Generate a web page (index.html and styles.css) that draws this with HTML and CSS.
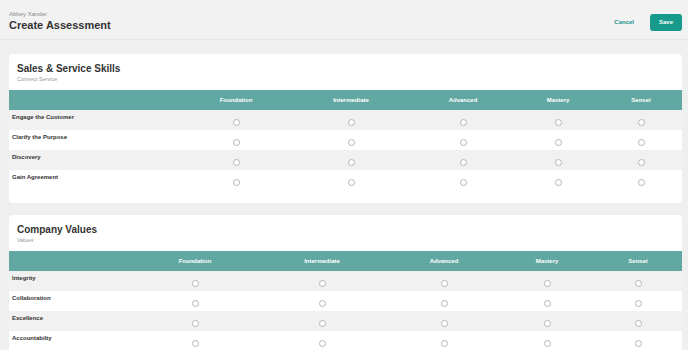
FILE: index.html
```html
<!DOCTYPE html>
<html lang="en">
<head>
    <meta charset="UTF-8">
    <meta name="viewport" content="width=device-width, initial-scale=1.0">
    <title>Create Assessment</title>
    <link rel="stylesheet" href="styles.css">
</head>
<body>

<div class="topbar">
    <div class="title-block">
        <div class="person">Abbey Xander</div>
        <h1>Create Assessment</h1>
    </div>
    <div class="actions">
        <button class="btn-cancel">Cancel</button>
        <button class="btn-save">Save</button>
    </div>
</div>

<div class="content">
    <div class="card">
        <div class="card-head">
            <h2>Sales &amp; Service Skills</h2>
            <div class="sub">Connect Service</div>
        </div>
        <table class="grid skills">
            <colgroup>
                <col class="c-label"><col class="c1"><col class="c2"><col class="c3"><col class="c4"><col class="c5">
            </colgroup>
            <thead>
                <tr><th></th><th>Foundation</th><th>Intermediate</th><th>Advanced</th><th>Mastery</th><th>Sensei</th></tr>
            </thead>
            <tbody id="skillsBody"></tbody>
        </table>
    </div>

    <div class="card">
        <div class="card-head">
            <h2>Company Values</h2>
            <div class="sub">Values</div>
        </div>
        <table class="grid values">
            <colgroup>
                <col class="c-label"><col class="c1"><col class="c2"><col class="c3"><col class="c4"><col class="c5">
            </colgroup>
            <thead>
                <tr><th></th><th>Foundation</th><th>Intermediate</th><th>Advanced</th><th>Mastery</th><th>Sensei</th></tr>
            </thead>
            <tbody id="valuesBody"></tbody>
        </table>
    </div>
</div>

<script>
    const skills = ['Engage the Customer', 'Clarify the Purpose', 'Discovery', 'Gain Agreement'];
    const values = ['Integrity', 'Collaboration', 'Excellence', 'Accountabilty'];

    function fillRows(tbody, items, group) {
        items.forEach((name, i) => {
            const tr = document.createElement('tr');
            let cells = `<td class="label">${name}</td>`;
            for (let lvl = 0; lvl < 5; lvl++) {
                cells += `<td class="pick"><input type="radio" name="${group}-${i}" value="${lvl}"></td>`;
            }
            tr.innerHTML = cells;
            tbody.appendChild(tr);
        });
    }

    fillRows(document.getElementById('skillsBody'), skills, 'skill');
    fillRows(document.getElementById('valuesBody'), values, 'value');
</script>

</body>
</html>
```

FILE: styles.css
```css
body {
    font-family: "Liberation Sans", Arial, sans-serif;
    margin: 0;
    background-color: #efefef;
    color: #333;
}
.topbar {
    display: flex;
    justify-content: space-between;
    align-items: center;
    height: 39px;
    padding: 0 6px 0 9px;
    background-color: #f2f2f2;
    border-bottom: 1px solid #e6e6e6;
}
.person {
    font-size: 6px;
    color: #888;
    margin-top: 3px;
}
h1 {
    margin: 2px 0 0;
    font-size: 11px;
    color: #333;
}
.actions {
    display: flex;
    align-items: center;
    gap: 16px;
    margin-top: 5px;
}
.actions button {
    font-family: inherit;
    font-size: 6px;
    font-weight: bold;
    cursor: pointer;
}
.btn-cancel {
    background: none;
    border: none;
    color: #1a968a;
    padding: 0;
}
.btn-save {
    background-color: #17998b;
    color: #fff;
    border: none;
    border-radius: 3px;
    width: 32px;
    height: 17px;
}
.content {
    padding: 14px 6px 0 9px;
}
.card {
    background-color: #fff;
    border-radius: 4px;
    margin-bottom: 12px;
    padding-bottom: 13px;
    overflow: hidden;
}
.card-head {
    padding: 9px 8px 8px;
}
h2 {
    margin: 0;
    font-size: 10px;
    color: #333;
}
.sub {
    font-size: 5.5px;
    color: #999;
    margin-top: 2px;
}
.grid {
    width: 100%;
    border-collapse: collapse;
    table-layout: fixed;
}
.grid th {
    background-color: #61a8a2;
    color: #fff;
    font-size: 6px;
    font-weight: bold;
    height: 20px;
    padding: 0;
}
.grid tbody tr {
    height: 20px;
}
.grid td {
    padding: 0;
}
.grid tbody tr:nth-child(odd) {
    background-color: #f1f1f1;
}
.grid td.label {
    font-size: 6px;
    font-weight: bold;
    line-height: 7px;
    vertical-align: top;
    padding: 4px 3px 0;
}
.grid td.pick {
    vertical-align: top;
    padding-top: 9px;
}
.grid input[type="radio"] {
    appearance: none;
    -webkit-appearance: none;
    box-sizing: border-box;
    width: 7px;
    height: 7px;
    border: 1px solid #b5b5b5;
    border-radius: 50%;
    background: #fff;
    display: block;
    margin: 0 auto;
}
.grid input[type="radio"]:checked {
    background: #17998b;
    border-color: #17998b;
}
.skills .c-label { width: 171px; }
.skills .c1 { width: 112px; }
.skills .c2 { width: 118px; }
.skills .c3 { width: 106px; }
.skills .c4 { width: 84px; }
.skills .c5 { width: 82px; }
.values .c-label { width: 125px; }
.values .c1 { width: 122px; }
.values .c2 { width: 132px; }
.values .c3 { width: 112px; }
.values .c4 { width: 94px; }
.values .c5 { width: 88px; }
```
